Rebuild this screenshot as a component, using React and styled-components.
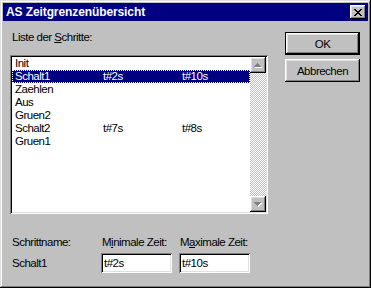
import React from "react";
import styled, { createGlobalStyle, css } from "styled-components";

const GlobalStyle = createGlobalStyle`
  html, body {
    margin: 0;
    padding: 0;
    background: #c0c0c0;
  }
  body {
    font-family: "Liberation Sans", Arial, sans-serif;
    font-size: 11.5px;
    letter-spacing: -0.5px;
    color: #000;
  }
`;

const raised = css`
  background: #c0c0c0;
  box-shadow: inset -1px -1px #000, inset 1px 1px #fff,
    inset -2px -2px #808080, inset 2px 2px #dfdfdf;
`;

const sunken = css`
  box-shadow: inset 1px 1px #808080, inset -1px -1px #fff,
    inset 2px 2px #000, inset -2px -2px #dfdfdf;
`;

const Window = styled.div`
  width: 371px;
  height: 288px;
  box-sizing: border-box;
  padding: 3px;
  background: #c0c0c0;
  box-shadow: inset -1px -1px #000, inset 1px 1px #dfdfdf,
    inset -2px -2px #808080, inset 2px 2px #fff;
  display: flex;
  flex-direction: column;
`;

const TitleBar = styled.div`
  height: 18px;
  background: #000080;
  display: flex;
  align-items: center;
  justify-content: space-between;
  padding: 0 2px 0 3px;
`;

const Title = styled.span`
  color: #fff;
  font-weight: bold;
  font-size: 12px;
  letter-spacing: -0.1px;
`;

const CloseButton = styled.div`
  ${raised};
  width: 16px;
  height: 14px;
  display: flex;
  align-items: center;
  justify-content: center;
`;

const Body = styled.div`
  display: flex;
  align-items: flex-start;
  padding: 10px 0 0 7px;
`;

const LeftColumn = styled.div`
  width: 258px;
  display: flex;
  flex-direction: column;
`;

const Label = styled.div`
  line-height: 13px;
  height: 13px;
  padding-left: ${(p) => p.$indent || 0}px;
  white-space: nowrap;
`;

const ListBox = styled.div`
  ${sunken};
  margin-top: 11px;
  height: 159px;
  box-sizing: border-box;
  padding: 2px;
  background: #fff;
  display: flex;
`;

const Rows = styled.div`
  flex: 1;
  display: flex;
  flex-direction: column;
`;

const Row = styled.div`
  display: grid;
  grid-template-columns: 88px 79px 1fr;
  height: 13px;
  line-height: 13px;
  padding-left: 3px;
  white-space: nowrap;
  ${(p) =>
    p.$selected &&
    css`
      background: #000080;
      color: #fff;
      outline: 1px dotted #fff;
      outline-offset: -1px;
    `}
`;

const ScrollBar = styled.div`
  width: 16px;
  display: flex;
  flex-direction: column;
`;

const ScrollButton = styled.div`
  ${raised};
  width: 16px;
  height: 16px;
  display: flex;
  align-items: center;
  justify-content: center;
`;

const Track = styled.div`
  flex: 1;
  background-image: conic-gradient(#fff 25%, #c0c0c0 0 50%, #fff 0 75%, #c0c0c0 0);
  background-size: 2px 2px;
`;

const Fields = styled.div`
  margin-top: 22px;
  display: grid;
  grid-template-columns: 91px 78px 71px;
  grid-template-rows: 13px 20px;
  row-gap: 4px;
  align-items: center;
`;

const Value = styled.div`
  padding-left: 2px;
  line-height: 13px;
`;

const Field = styled.div`
  ${sunken};
  width: 71px;
  height: 20px;
  box-sizing: border-box;
  background: #fff;
  padding-left: 3px;
  display: flex;
  align-items: center;
`;

const RightColumn = styled.div`
  margin: 1px 0 0 17px;
  display: flex;
  flex-direction: column;
  gap: 4px;
`;

const Button = styled.div`
  ${raised};
  width: 75px;
  height: 23px;
  box-sizing: border-box;
  display: flex;
  align-items: center;
  justify-content: center;
  ${(p) =>
    p.$default &&
    css`
      border: 1px solid #000;
    `}
`;

const CloseGlyph = () => {
  const px = [
    [0, 0], [1, 0], [6, 0], [7, 0],
    [1, 1], [2, 1], [5, 1], [6, 1],
    [2, 2], [3, 2], [4, 2], [5, 2],
    [3, 3], [4, 3],
    [2, 4], [3, 4], [4, 4], [5, 4],
    [1, 5], [2, 5], [5, 5], [6, 5],
    [0, 6], [1, 6], [6, 6], [7, 6],
  ];
  return (
    <svg width="8" height="7" viewBox="0 0 8 7" shapeRendering="crispEdges">
      {px.map(([x, y]) => (
        <rect key={`${x}-${y}`} x={x} y={y} width="1" height="1" fill="#000" />
      ))}
    </svg>
  );
};

const upArrow = "M3 0h1v1h1v1h1v1h1v1H0V3h1V2h1V1h1z";
const downArrow = "M0 0h7v1H6v1H5v1H4v1H3V3H2V2H1V1H0z";

const Arrow = ({ dir }) => (
  <svg width="8" height="5" viewBox="0 0 8 5" shapeRendering="crispEdges">
    <path d={dir === "up" ? upArrow : downArrow} fill="#fff" transform="translate(1 1)" />
    <path d={dir === "up" ? upArrow : downArrow} fill="#808080" />
  </svg>
);

const steps = [
  { name: "Init", min: "", max: "" },
  { name: "Schalt1", min: "t#2s", max: "t#10s" },
  { name: "Zaehlen", min: "", max: "" },
  { name: "Aus", min: "", max: "" },
  { name: "Gruen2", min: "", max: "" },
  { name: "Schalt2", min: "t#7s", max: "t#8s" },
  { name: "Gruen1", min: "", max: "" },
];

export default function App() {
  return (
    <>
      <GlobalStyle />
      <Window>
        <TitleBar>
          <Title>AS Zeitgrenzenübersicht</Title>
          <CloseButton>
            <CloseGlyph />
          </CloseButton>
        </TitleBar>
        <Body>
          <LeftColumn>
            <Label $indent={2}>
              Liste der <u>S</u>chritte:
            </Label>
            <ListBox>
              <Rows>
                {steps.map((s) => (
                  <Row key={s.name} $selected={s.name === "Schalt1"}>
                    <span>{s.name}</span>
                    <span>{s.min}</span>
                    <span>{s.max}</span>
                  </Row>
                ))}
              </Rows>
              <ScrollBar>
                <ScrollButton>
                  <Arrow dir="up" />
                </ScrollButton>
                <Track />
                <ScrollButton>
                  <Arrow dir="down" />
                </ScrollButton>
              </ScrollBar>
            </ListBox>
            <Fields>
              <Label $indent={2}>Schrittname:</Label>
              <Label $indent={1}>
                M<u>i</u>nimale Zeit:
              </Label>
              <Label $indent={1}>
                M<u>a</u>ximale Zeit:
              </Label>
              <Value>Schalt1</Value>
              <Field>t#2s</Field>
              <Field>t#10s</Field>
            </Fields>
          </LeftColumn>
          <RightColumn>
            <Button $default>OK</Button>
            <Button>Abbrechen</Button>
          </RightColumn>
        </Body>
      </Window>
    </>
  );
}
